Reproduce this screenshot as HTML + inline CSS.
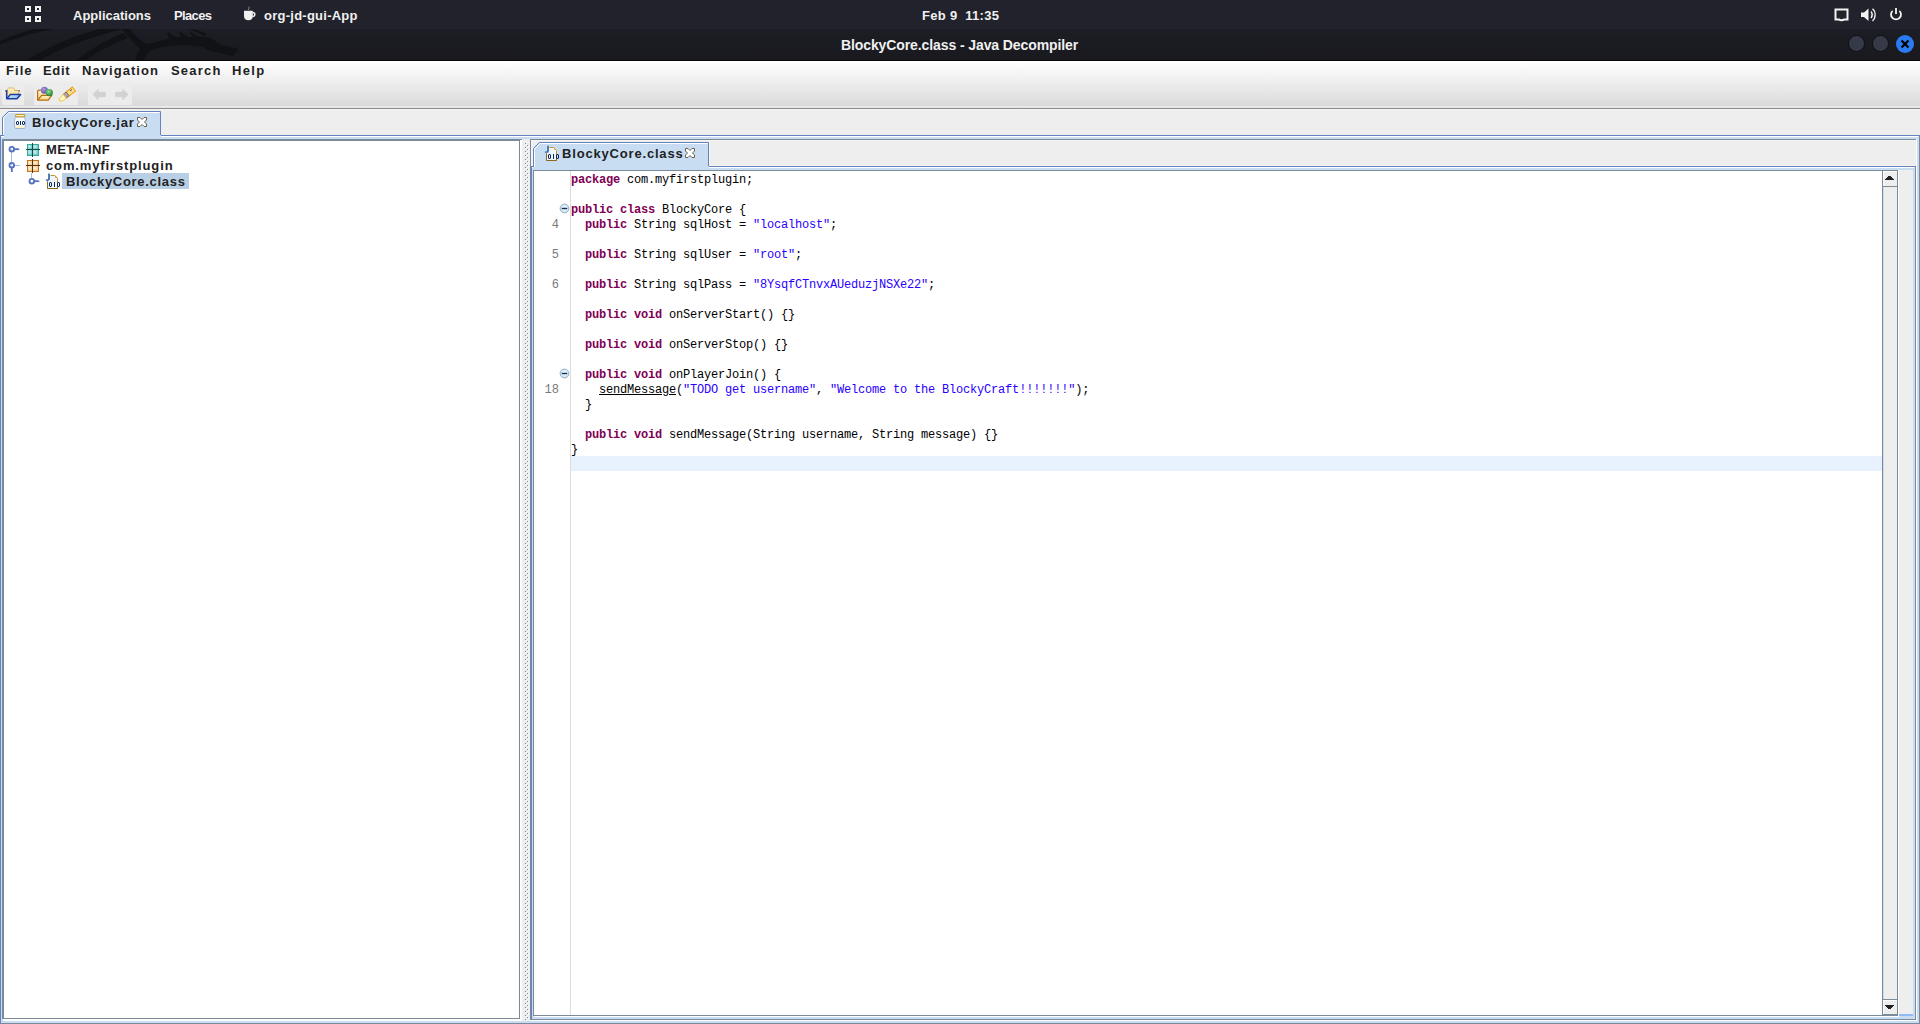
<!DOCTYPE html>
<html><head><meta charset="utf-8">
<style>
*{box-sizing:border-box}
html,body{margin:0;padding:0}
body{width:1920px;height:1024px;position:relative;overflow:hidden;background:#eeeeee;font-family:"Liberation Sans",sans-serif}
.a{position:absolute}
svg{position:absolute;overflow:visible}
.tb{color:#f0f0f0;font-weight:bold;font-size:13px;white-space:nowrap;line-height:16px}
.menu{font-weight:bold;font-size:13px;color:#222;letter-spacing:1.05px;white-space:nowrap;line-height:16px}
.ui{font-weight:bold;font-size:13px;color:#222;letter-spacing:0.75px;white-space:nowrap;line-height:16px}
.code{font-family:"Liberation Mono",monospace;font-size:12px;letter-spacing:-0.2px;white-space:pre;color:#000;line-height:15px}
.k{color:#7f0055;font-weight:bold}
.s{color:#2a00ff}
.u{text-decoration:underline}
.ln{font-family:"Liberation Mono",monospace;font-size:12px;color:#787878;white-space:pre;line-height:15px;text-align:right;width:30px}
.h{height:1px}
.v{width:1px}
</style></head><body>
<!-- ============ GNOME top bar ============ -->
<div class="a" style="left:0;top:0;width:1920px;height:29px;background:#21222b"></div>
<div class="a" style="left:0;top:29px;width:1920px;height:31px;background:linear-gradient(#1c1e25,#19191e)"></div>
<!-- dragon -->
<svg style="left:0;top:29px" width="260" height="31" viewBox="0 29 260 31">
 <g fill="#111216">
  <path d="M0 41 Q18 33 35 29 L54 29 Q25 34 0 44.5 Z"/>
  <path d="M28 60 Q58 40 100 29 L122 29 Q72 42 40 60 Z"/>
  <path d="M77 60 Q98 43 124 33 L128 38 Q104 47 86 60 Z"/>
  <path d="M122 29 L130 29 Q136 37 142 41 Q146 44 149 44 Q160 41 170 38 Q166 35 168 31 Q171 36 176 37 L182 37 Q178 34 180 31 Q184 36 190 37 L193 37 Q189 34 191 32 Q196 37 204 37 L209 37 Q215 41 222 45 L239 49 L233 56 Q220 53 207 50 L203 47 Q190 45 178 45 Q163 46 152 50 Q147 53 144 60 L135 60 Q137 53 140 50 Q138 46 135 44 Q129 38 122 29 Z"/>
  <path d="M188 29 Q200 30 207 34 L205 36 Q197 32 188 29 Z"/>
 </g>
</svg>
<!-- apps grid -->
<svg style="left:25px;top:6px" width="17" height="17">
 <g fill="none" stroke="#f2f2f2" stroke-width="2">
  <rect x="1" y="1" width="4" height="4"/><rect x="11" y="1" width="4" height="4"/>
  <rect x="1" y="11" width="4" height="4"/><rect x="11" y="11" width="4" height="4"/>
 </g>
</svg>
<div class="a tb" style="left:73px;top:8px">Applications</div>
<div class="a tb" style="left:174px;top:8px;letter-spacing:-0.65px">Places</div>
<!-- coffee cup -->
<svg style="left:243px;top:7px" width="14" height="14">
 <path d="M1 3.8 H9.8 V9 C9.8 12 8 13.3 5.4 13.3 C2.8 13.3 1 12 1 9 Z" fill="#f0f0f0"/>
 <path d="M9.6 5.5 C12.6 5.5 12.6 9.5 9.4 9.5" fill="none" stroke="#f0f0f0" stroke-width="1.5"/>
 <path d="M5.8 3 C4.8 2 6.8 1 5.8 -0.3" fill="none" stroke="#9a9a9a" stroke-width="0.9"/>
</svg>
<div class="a tb" style="left:264px;top:8px;letter-spacing:0.25px">org-jd-gui-App</div>
<div class="a tb" style="left:922px;top:8px;letter-spacing:0.3px">Feb 9&nbsp; 11:35</div>
<div class="a tb" style="left:841px;top:37px;font-size:14px;letter-spacing:-0.1px">BlockyCore.class - Java Decompiler</div>
<!-- tray icons -->
<svg style="left:1834px;top:8px" width="16" height="14">
 <path d="M1.5 1.5 H13.5 V11.5 H10 C9 12.5 6 12.5 5 11.5 H1.5 Z" fill="none" stroke="#f2f2f2" stroke-width="2"/>
</svg>
<svg style="left:1861px;top:8px" width="16" height="14">
 <path d="M0 4.5 H3 L7.5 0.5 V13 L3 9 H0 Z" fill="#f2f2f2"/>
 <path d="M10 3.5 C11.5 5 11.5 8.5 10 10" fill="none" stroke="#f2f2f2" stroke-width="1.6"/>
 <path d="M11.5 0.8 C15 3.5 15 10 11.5 13" fill="none" stroke="#f2f2f2" stroke-width="1.3"/>
</svg>
<svg style="left:1889px;top:7px" width="14" height="14">
 <path d="M3.6 3.8 A5 5 0 1 0 10.4 3.8" fill="none" stroke="#f2f2f2" stroke-width="1.8"/>
 <path d="M7 1 V7" stroke="#f2f2f2" stroke-width="1.8"/>
</svg>
<!-- window buttons -->
<div class="a" style="left:1848px;top:35px;width:17px;height:17px;border-radius:50%;background:#363a48;border:1px solid #0e0f12"></div>
<div class="a" style="left:1872px;top:35px;width:17px;height:17px;border-radius:50%;background:#363a48;border:1px solid #0e0f12"></div>
<div class="a" style="left:1896px;top:35px;width:18px;height:18px;border-radius:50%;background:#2a7bf2"></div>
<svg style="left:1900px;top:39px" width="10" height="10">
 <path d="M1.5 1.5 L8.5 8.5 M8.5 1.5 L1.5 8.5" stroke="#000" stroke-width="2.2"/>
</svg>
<div class="a" style="left:0;top:60px;width:1920px;height:1px;background:#060708"></div>

<!-- ============ menubar + toolbar ============ -->
<div class="a" style="left:0;top:61px;width:1920px;height:45px;background:linear-gradient(#ffffff,#dadada)"></div>
<div class="a menu" style="left:6px;top:63px">File</div>
<div class="a menu" style="left:43px;top:63px;letter-spacing:0.7px">Edit</div>
<div class="a menu" style="left:82px;top:63px">Navigation</div>
<div class="a menu" style="left:171px;top:63px;letter-spacing:1.2px">Search</div>
<div class="a menu" style="left:232px;top:63px;letter-spacing:1.3px">Help</div>
<!-- toolbar button panels -->
<div class="a" style="left:2px;top:83px;width:22px;height:22px;background:#ececec"></div>
<div class="a" style="left:34px;top:83px;width:44px;height:22px;background:#ececec"></div>
<div class="a" style="left:88px;top:83px;width:44px;height:22px;background:#ececec"></div>
<!-- open file icon -->
<svg style="left:4px;top:86px" width="18" height="16" viewBox="0 0 18 16">
 <defs><linearGradient id="fy" x1="0" y1="0" x2="0" y2="1"><stop offset="0" stop-color="#fff6cc"/><stop offset="1" stop-color="#f6d27a"/></linearGradient>
 <linearGradient id="fb" x1="0" y1="0" x2="1" y2="1"><stop offset="0" stop-color="#d8f0ff"/><stop offset="1" stop-color="#7ab8f0"/></linearGradient></defs>
 <rect x="1" y="4" width="15" height="1.6" fill="#8c7c96"/>
 <path d="M3.5 12 V3.5 C3.5 2.5 4 2 5 2 H9 C10 2 10.5 2.5 10.5 3.5 V4.5 H14.5 V9" fill="url(#fy)" stroke="#d0a850" stroke-width="0.8"/>
 <path d="M2.8 12.8 L6.2 8.6 H16.6 L13 12.8 Z" fill="url(#fb)" stroke="#1c3ca8" stroke-width="1.5" stroke-linejoin="round"/>
 <path d="M2.6 4.2 V12.8" stroke="#1c3ca8" stroke-width="1.4"/>
</svg>
<!-- open type icon -->
<svg style="left:36px;top:86px" width="18" height="16" viewBox="0 0 18 16">
 <path d="M1.6 14 V5.5 C1.6 4.6 2.2 4.2 3 4.2 H6 L7 5.2 H11 V9" fill="url(#fy)" stroke="#b86e14" stroke-width="1.2"/>
 <path d="M1.8 14.2 L5.6 9.4 H15.8 L12.2 14.2 Z" fill="url(#fy)" stroke="#b86e14" stroke-width="1.2" stroke-linejoin="round"/>
 <defs><radialGradient id="bp" cx=".4" cy=".35" r=".7"><stop offset="0" stop-color="#b0a0e8"/><stop offset="1" stop-color="#5a44a0"/></radialGradient>
 <radialGradient id="bg" cx=".4" cy=".35" r=".7"><stop offset="0" stop-color="#90e090"/><stop offset="1" stop-color="#1a7a2a"/></radialGradient></defs>
 <circle cx="8.4" cy="4.3" r="3.5" fill="url(#bp)"/>
 <circle cx="13.3" cy="6.6" r="3.6" fill="url(#bg)"/>
</svg>
<!-- search icon (pencil) -->
<svg style="left:58px;top:86px" width="18" height="16" viewBox="0 0 18 16">
 <path d="M17.6 5 L14.4 1 L8.1 6 L11.3 9.9 Z" fill="#fbe08a" stroke="#f0a020" stroke-width="1.1" stroke-linejoin="round"/>
 <circle cx="13.5" cy="3.8" r="0.6" fill="#3050a0"/><circle cx="12.6" cy="4.6" r="0.6" fill="#3050a0"/>
 <path d="M11.3 9.9 L8.1 6 L5.2 8.3 L8.4 12.2 Z" fill="#aaa4b4" stroke="#8a6a3a" stroke-width="0.9" stroke-linejoin="round"/>
 <path d="M8.4 12.2 L5.2 8.3 L1 13.2 L1.6 15 L4.6 15 Z" fill="#fff8c0" stroke="#f0b830" stroke-width="0.8" stroke-linejoin="round"/>
</svg>
<!-- back/forward arrows (disabled) -->
<svg style="left:92px;top:88px" width="15" height="13" viewBox="0 0 15 13">
 <path d="M0.5 6.5 L6.5 0.5 V3.8 H12.5 C13.8 3.8 14 4.5 14 6.5 C14 8.5 13.8 9.2 12.5 9.2 H6.5 V12.5 Z" fill="#d2d2d2"/>
</svg>
<svg style="left:114px;top:88px" width="15" height="13" viewBox="0 0 15 13">
 <path d="M14.5 6.5 L8.5 0.5 V3.8 H2.5 C1.2 3.8 1 4.5 1 6.5 C1 8.5 1.2 9.2 2.5 9.2 H8.5 V12.5 Z" fill="#d2d2d2"/>
</svg>
<div class="a" style="left:0;top:106px;width:1920px;height:2px;background:#ebebeb"></div>
<div class="a h" style="left:0;top:108px;width:1920px;background:#8e8e8e"></div>
<div class="a h" style="left:0;top:107px;width:1920px;background:#e2e2e2"></div>
<div class="a" style="left:0;top:109px;width:1920px;height:2px;background:#f2f1ee"></div>

<!-- ============ outer tab pane (jar) ============ -->
<!-- content area fill -->
<div class="a" style="left:0;top:135px;width:1920px;height:889px;background:#c8ddf2"></div>
<!-- content border -->
<div class="a h" style="left:0;top:135px;width:3px;background:#6382bf"></div>
<div class="a h" style="left:160px;top:135px;width:1759px;background:#6382bf"></div>
<div class="a h" style="left:1px;top:136px;width:2px;background:#fff"></div>
<div class="a h" style="left:161px;top:136px;width:1757px;background:#fff"></div>
<div class="a v" style="left:0;top:135px;height:889px;background:#6382bf"></div>
<div class="a v" style="left:1919px;top:135px;height:889px;background:#7a8a99"></div>
<div class="a h" style="left:0;top:1023px;width:1920px;background:#7a8a99"></div>
<!-- jar tab -->
<div class="a" style="left:2px;top:111px;width:159px;height:26px;background:#c8ddf2;clip-path:polygon(6px 0,100% 0,100% 100%,0 100%,0 6px)"></div>
<svg style="left:0;top:108px" width="170" height="30">
 <path d="M2.5 28 V9.5 L8.5 3.5 H160.5 V27" fill="none" stroke="#6382bf" stroke-width="1"/>
 <path d="M3.5 28 V9.9 L8.9 4.5 H159.5" fill="none" stroke="#fff" stroke-width="1"/>
</svg>
<div class="a h" style="left:0;top:135px;width:4px;background:#6382bf"></div>
<div class="a h" style="left:1px;top:136px;width:3px;background:#fff"></div>
<!-- jar icon -->
<svg style="left:13px;top:113px" width="15" height="17" viewBox="0 0 15 17">
 <defs><linearGradient id="jb" x1="0" y1="0" x2="0" y2="1"><stop offset="0" stop-color="#ffffff"/><stop offset="0.7" stop-color="#f2f6fc"/><stop offset="1" stop-color="#fff4c0"/></linearGradient></defs>
 <path d="M3 4 C1 5.5 1 13 2.5 15.5 H11.5 C13 13 13 5.5 11 4 Z" fill="url(#jb)" stroke="#8fa4cc" stroke-width="0.8"/>
 <rect x="2.5" y="13.6" width="9" height="1.3" fill="#fbf0b8"/>
 <rect x="2.5" y="1.5" width="9.5" height="2.2" rx="1.1" fill="#fff2b8" stroke="#c49a2c" stroke-width="1.1"/>
 <g fill="#0d2a5e" shape-rendering="crispEdges"><rect x="3" y="9" width="1" height="2"/><rect x="5" y="9" width="1" height="2"/><rect x="4" y="8" width="1" height="1"/><rect x="4" y="11" width="1" height="1"/><rect x="3" y="8" width="1" height="1" opacity=".45"/><rect x="5" y="8" width="1" height="1" opacity=".45"/><rect x="3" y="11" width="1" height="1" opacity=".45"/><rect x="5" y="11" width="1" height="1" opacity=".45"/><rect x="7" y="8" width="1" height="4"/><rect x="9" y="9" width="1" height="2"/><rect x="11" y="9" width="1" height="2"/><rect x="10" y="8" width="1" height="1"/><rect x="10" y="11" width="1" height="1"/><rect x="9" y="8" width="1" height="1" opacity=".45"/><rect x="11" y="8" width="1" height="1" opacity=".45"/><rect x="9" y="11" width="1" height="1" opacity=".45"/><rect x="11" y="11" width="1" height="1" opacity=".45"/></g>
</svg>
<div class="a ui" style="left:32px;top:115px;letter-spacing:0.77px">BlockyCore.jar</div>
<!-- close x -->
<svg style="left:137px;top:117px" width="10" height="10" viewBox="0 0 10 10">
 <path d="M0.5 0.5 H3 L5 2.5 L7 0.5 H9.5 V3 L7.5 5 L9.5 7 V9.5 H7 L5 7.5 L3 9.5 H0.5 V7 L2.5 5 L0.5 3 Z" fill="#fff" stroke="#6b6150" stroke-width="1"/>
</svg>

<!-- ============ tree pane ============ -->
<div class="a" style="left:2px;top:139px;width:518px;height:880px;background:#fff;border:1px solid #7a8a99;border-top-width:2px;border-left-width:2px"></div>
<div class="a" style="left:520px;top:140px;width:2px;height:881px;background:#fff"></div>
<div class="a" style="left:3px;top:1019px;width:518px;height:2px;background:#fff"></div>
<div class="a h" style="left:519px;top:139px;width:3px;background:#7a8a99"></div>
<!-- tree lines/handles -->
<svg style="left:0;top:140px" width="200" height="50">
 <path d="M11.5 9 V25" stroke="#a8c0e0" stroke-width="1"/>
 <path d="M14 9.5 H20" stroke="#a8c0e0" stroke-width="1"/>
 <path d="M14 25.5 H20" stroke="#a8c0e0" stroke-width="1"/>
 <path d="M31.5 33 V38" stroke="#a8c0e0" stroke-width="1"/>
 <path d="M34 41.5 H40" stroke="#a8c0e0" stroke-width="1"/>
 <g fill="none" stroke="#5272c0" stroke-width="1.8">
  <circle cx="11.8" cy="9.2" r="2.3"/><path d="M14 9.2 H18.8"/>
  <circle cx="11.8" cy="25.2" r="2.3"/><path d="M11.8 27.5 V32"/>
  <circle cx="31.8" cy="41.2" r="2.3"/><path d="M34 41.2 H38.8"/>
 </g>
</svg>
<!-- package icons -->
<svg style="left:26px;top:143px" width="14" height="14" viewBox="0 0 14 14">
 <defs><radialGradient id="pt" cx=".4" cy=".4" r=".7"><stop offset="0" stop-color="#d8f4f2"/><stop offset="1" stop-color="#5cc6c0"/></radialGradient>
 <radialGradient id="po" cx=".4" cy=".4" r=".7"><stop offset="0" stop-color="#fff4d0"/><stop offset="1" stop-color="#f0c890"/></radialGradient></defs>
 <rect x="1.5" y="1.5" width="11" height="11" fill="#6fd0ca" stroke="#34aca4" stroke-width="1"/>
 <rect x="2" y="2" width="4" height="4" fill="url(#pt)"/><rect x="7" y="2" width="5" height="4" fill="url(#pt)"/>
 <rect x="2" y="7" width="4" height="5" fill="url(#pt)"/><rect x="7" y="7" width="5" height="5" fill="url(#pt)"/>
 <path d="M6.5 0 V14 M0 6.5 H14" stroke="#1a4a48" stroke-width="1"/>
</svg>
<svg style="left:26px;top:159px" width="14" height="14" viewBox="0 0 14 14">
 <rect x="1.5" y="1.5" width="11" height="11" fill="#f2cf98" stroke="#c8701e" stroke-width="1"/>
 <rect x="2" y="2" width="4" height="4" fill="url(#po)"/><rect x="7" y="2" width="5" height="4" fill="url(#po)"/>
 <rect x="2" y="7" width="4" height="5" fill="url(#po)"/><rect x="7" y="7" width="5" height="5" fill="url(#po)"/>
 <path d="M6.5 0 V14 M0 6.5 H14" stroke="#5a3010" stroke-width="1"/>
</svg>
<div class="a ui" style="left:46px;top:142px;letter-spacing:0.36px">META-INF</div>
<div class="a ui" style="left:46px;top:158px;letter-spacing:0.87px">com.myfirstplugin</div>
<!-- class icon in tree -->
<svg style="left:44px;top:172px" width="18" height="18" viewBox="0 0 18 18" shape-rendering="crispEdges">
 <path d="M6 3 H11 L14 6 V17 H3 V9 H6 Z" fill="#eef4fc"/>
 <path d="M11 3 L14 6 H11 Z" fill="#e4c27a" shape-rendering="auto"/>
 <path d="M6.5 3.5 H10.5 L13.5 6.5 V16.5 H3.5 V9" fill="none" stroke="#c49428" stroke-width="1" shape-rendering="auto"/>
 <path d="M3.5 9.5 V16.5 H13.5 V14" fill="none" stroke="#8a6a20" stroke-width="1" shape-rendering="auto"/>
 <path d="M4 1.5 H6 V6.5 C6 8.3 5 9 3.5 9 H1.8 V7.3 H3.3 C3.9 7.3 4 7 4 6.5 Z" fill="#2b66a8" stroke="#ffffff" stroke-width="0.6" stroke-opacity=".5" shape-rendering="auto"/>
 <g fill="#0d2a5e"><rect x="5" y="11" width="1" height="3"/><rect x="7" y="11" width="1" height="3"/><rect x="6" y="10" width="1" height="1"/><rect x="6" y="14" width="1" height="1"/><rect x="5" y="10" width="1" height="1" opacity=".45"/><rect x="7" y="10" width="1" height="1" opacity=".45"/><rect x="5" y="14" width="1" height="1" opacity=".45"/><rect x="7" y="14" width="1" height="1" opacity=".45"/><rect x="10" y="10" width="1" height="5"/><rect x="9.6" y="10" width="1.6" height="5" opacity=".5"/><rect x="13" y="11" width="1" height="3"/><rect x="15" y="11" width="1" height="3"/><rect x="14" y="10" width="1" height="1"/><rect x="14" y="14" width="1" height="1"/><rect x="13" y="10" width="1" height="1" opacity=".45"/><rect x="15" y="10" width="1" height="1" opacity=".45"/><rect x="13" y="14" width="1" height="1" opacity=".45"/><rect x="15" y="14" width="1" height="1" opacity=".45"/></g>
</svg>
<div class="a" style="left:62px;top:173px;width:127px;height:16px;background:#b8cfe5"></div>
<div class="a ui" style="left:66px;top:174px;letter-spacing:0.7px">BlockyCore.class</div>

<!-- ============ split divider ============ -->
<svg style="left:522px;top:139px" width="8" height="882">
 <defs><pattern id="bump" x="3" y="0" width="4" height="4" patternUnits="userSpaceOnUse">
  <rect x="0" y="0" width="1" height="1" fill="#7a8a99"/>
  <rect x="1" y="1" width="1" height="1" fill="#ffffff"/>
  <rect x="2" y="2" width="1" height="1" fill="#7a8a99"/>
  <rect x="3" y="3" width="1" height="1" fill="#ffffff"/>
 </pattern></defs>
 <rect x="0" y="0" width="8" height="882" fill="#eeeeee"/>
 <rect x="3" y="4" width="4" height="878" fill="url(#bump)"/>
</svg>

<!-- ============ editor panel ============ -->
<div class="a" style="left:530px;top:139px;width:1386px;height:881px;background:#eeeeee;border-top:1px solid #7a8a99;border-left:1px solid #7a8a99"></div>
<div class="a v" style="left:1916px;top:139px;height:882px;background:#fff"></div>
<div class="a h" style="left:530px;top:1020px;width:1387px;background:#fff"></div>
<div class="a h" style="left:531px;top:140px;width:1385px;background:#f6f4f0"></div>
<div class="a" style="left:531px;top:140px;width:2px;height:26px;background:#f6f4f0"></div>
<div class="a v" style="left:709px;top:142px;height:24px;background:#f6f4f0"></div>
<div class="a h" style="left:709px;top:165px;width:1206px;background:#f6f4f0"></div>
<!-- inner tab content -->
<div class="a" style="left:531px;top:166px;width:1385px;height:854px;background:#c8ddf2"></div>
<div class="a h" style="left:531px;top:166px;width:3px;background:#6382bf"></div>
<div class="a h" style="left:708px;top:166px;width:1207px;background:#6382bf"></div>
<div class="a h" style="left:532px;top:167px;width:2px;background:#fff"></div>
<div class="a h" style="left:709px;top:167px;width:1205px;background:#fff"></div>
<div class="a v" style="left:531px;top:166px;height:853px;background:#6382bf"></div>
<div class="a v" style="left:1915px;top:166px;height:854px;background:#7a8a99"></div>
<div class="a h" style="left:531px;top:1019px;width:1385px;background:#7a8a99"></div>
<!-- class tab -->
<div class="a" style="left:533px;top:142px;width:176px;height:27px;background:#c8ddf2;clip-path:polygon(6px 0,100% 0,100% 100%,0 100%,0 6px)"></div>
<svg style="left:530px;top:139px" width="190" height="30">
 <path d="M3.5 28 V9.5 L9.5 3.5 H178.5 V27" fill="none" stroke="#6382bf" stroke-width="1"/>
 <path d="M4.5 28 V9.9 L9.9 4.5 H177.5" fill="none" stroke="#fff" stroke-width="1"/>
</svg>
<svg style="left:543px;top:144px" width="18" height="18" viewBox="0 0 18 18" shape-rendering="crispEdges">
 <path d="M6 3 H11 L14 6 V17 H3 V9 H6 Z" fill="#eef4fc"/>
 <path d="M11 3 L14 6 H11 Z" fill="#e4c27a" shape-rendering="auto"/>
 <path d="M6.5 3.5 H10.5 L13.5 6.5 V16.5 H3.5 V9" fill="none" stroke="#c49428" stroke-width="1" shape-rendering="auto"/>
 <path d="M3.5 9.5 V16.5 H13.5 V14" fill="none" stroke="#8a6a20" stroke-width="1" shape-rendering="auto"/>
 <path d="M4 1.5 H6 V6.5 C6 8.3 5 9 3.5 9 H1.8 V7.3 H3.3 C3.9 7.3 4 7 4 6.5 Z" fill="#2b66a8" stroke="#ffffff" stroke-width="0.6" stroke-opacity=".5" shape-rendering="auto"/>
 <g fill="#0d2a5e"><rect x="5" y="11" width="1" height="3"/><rect x="7" y="11" width="1" height="3"/><rect x="6" y="10" width="1" height="1"/><rect x="6" y="14" width="1" height="1"/><rect x="5" y="10" width="1" height="1" opacity=".45"/><rect x="7" y="10" width="1" height="1" opacity=".45"/><rect x="5" y="14" width="1" height="1" opacity=".45"/><rect x="7" y="14" width="1" height="1" opacity=".45"/><rect x="10" y="10" width="1" height="5"/><rect x="9.6" y="10" width="1.6" height="5" opacity=".5"/><rect x="13" y="11" width="1" height="3"/><rect x="15" y="11" width="1" height="3"/><rect x="14" y="10" width="1" height="1"/><rect x="14" y="14" width="1" height="1"/><rect x="13" y="10" width="1" height="1" opacity=".45"/><rect x="15" y="10" width="1" height="1" opacity=".45"/><rect x="13" y="14" width="1" height="1" opacity=".45"/><rect x="15" y="14" width="1" height="1" opacity=".45"/></g>
</svg>
<div class="a ui" style="left:562px;top:146px;letter-spacing:0.82px">BlockyCore.class</div>
<svg style="left:685px;top:148px" width="10" height="10" viewBox="0 0 10 10">
 <path d="M0.5 0.5 H3 L5 2.5 L7 0.5 H9.5 V3 L7.5 5 L9.5 7 V9.5 H7 L5 7.5 L3 9.5 H0.5 V7 L2.5 5 L0.5 3 Z" fill="#fff" stroke="#6b6150" stroke-width="1"/>
</svg>

<!-- code scroll pane -->
<div class="a" style="left:533px;top:170px;width:1365px;height:846px;background:#fff;border:1px solid #7a8a99"></div>
<div class="a v" style="left:1898px;top:170px;height:847px;background:#fff"></div>
<div class="a h" style="left:534px;top:1016px;width:1365px;background:#fff"></div>
<div class="a" style="left:1899px;top:170px;width:14px;height:846px;background:#eeeeee"></div>
<div class="a" style="left:1899px;top:1014px;width:14px;height:2px;background:#8fbaf5"></div>
<!-- current line -->
<div class="a" style="left:571px;top:456px;width:1311px;height:15px;background:#e8f2fe"></div>
<!-- gutter line -->
<div class="a v" style="left:570px;top:171px;height:844px;background:#dcdcdc"></div>
<!-- scrollbar -->
<div class="a v" style="left:1882px;top:171px;height:844px;background:#7a8a99"></div>
<div class="a" style="left:1884px;top:187px;width:13px;height:812px;background:#eeeeee"></div>
<div class="a v" style="left:1883px;top:187px;height:812px;background:#c8ddf2"></div>
<div class="a v" style="left:1898px;top:171px;height:845px;background:#fff"></div>
<div class="a v" style="left:1897px;top:171px;height:845px;background:#7a8a99"></div>
<div class="a" style="left:1883px;top:171px;width:14px;height:15px;background:#eeeeee;border-top:1px solid #fff;border-left:1px solid #fff"></div>
<div class="a h" style="left:1883px;top:186px;width:14px;background:#7a8a99"></div>
<svg style="left:1885px;top:176px" width="9" height="4" shape-rendering="crispEdges"><g fill="#222"><rect x="3" y="0" width="3" height="1"/><rect x="2" y="1" width="5" height="1"/><rect x="1" y="2" width="7" height="1"/><rect x="0" y="3" width="9" height="1"/></g></svg>
<div class="a h" style="left:1883px;top:999px;width:14px;background:#7a8a99"></div>
<div class="a" style="left:1883px;top:1000px;width:14px;height:14px;background:#eeeeee;border-top:1px solid #fff;border-left:1px solid #fff"></div>
<div class="a" style="left:1883px;top:1014px;width:15px;height:2px;background:#7a8a99"></div>
<svg style="left:1885px;top:1005px" width="9" height="4" shape-rendering="crispEdges"><g fill="#222"><rect x="0" y="0" width="9" height="1"/><rect x="1" y="1" width="7" height="1"/><rect x="2" y="2" width="5" height="1"/><rect x="3" y="3" width="3" height="1"/></g></svg>

<!-- line numbers -->
<div class="a ln" style="left:529px;top:218px">4</div>
<div class="a ln" style="left:529px;top:248px">5</div>
<div class="a ln" style="left:529px;top:278px">6</div>
<div class="a ln" style="left:529px;top:383px">18</div>
<!-- fold icons -->
<svg style="left:559px;top:203px" width="11" height="11" viewBox="0 0 11 11">
 <defs><radialGradient id="fg" cx="0.5" cy="0.45" r="0.6"><stop offset="0" stop-color="#eefaff"/><stop offset="0.7" stop-color="#cfeafa"/><stop offset="1" stop-color="#a8bccc"/></radialGradient></defs>
 <circle cx="5.5" cy="5.5" r="4.4" fill="url(#fg)" stroke="#95a5bb" stroke-width="0.9"/>
 <path d="M2.8 5.5 H8.2" stroke="#1a2a48" stroke-width="1.4"/>
</svg>
<svg style="left:559px;top:368px" width="11" height="11" viewBox="0 0 11 11">
 <circle cx="5.5" cy="5.5" r="4.4" fill="url(#fg)" stroke="#95a5bb" stroke-width="0.9"/>
 <path d="M2.8 5.5 H8.2" stroke="#1a2a48" stroke-width="1.4"/>
</svg>
<!-- code -->
<div class="a code" style="left:571px;top:173px"><span class="k">package</span> com.myfirstplugin;

<span class="k">public</span> <span class="k">class</span> BlockyCore {
  <span class="k">public</span> String sqlHost = <span class="s">"localhost"</span>;

  <span class="k">public</span> String sqlUser = <span class="s">"root"</span>;

  <span class="k">public</span> String sqlPass = <span class="s">"8YsqfCTnvxAUeduzjNSXe22"</span>;

  <span class="k">public</span> <span class="k">void</span> onServerStart() {}

  <span class="k">public</span> <span class="k">void</span> onServerStop() {}

  <span class="k">public</span> <span class="k">void</span> onPlayerJoin() {
    <span class="u">sendMessage</span>(<span class="s">"TODO get username"</span>, <span class="s">"Welcome to the BlockyCraft!!!!!!!"</span>);
  }

  <span class="k">public</span> <span class="k">void</span> sendMessage(String username, String message) {}
}
</div>
</body></html>
